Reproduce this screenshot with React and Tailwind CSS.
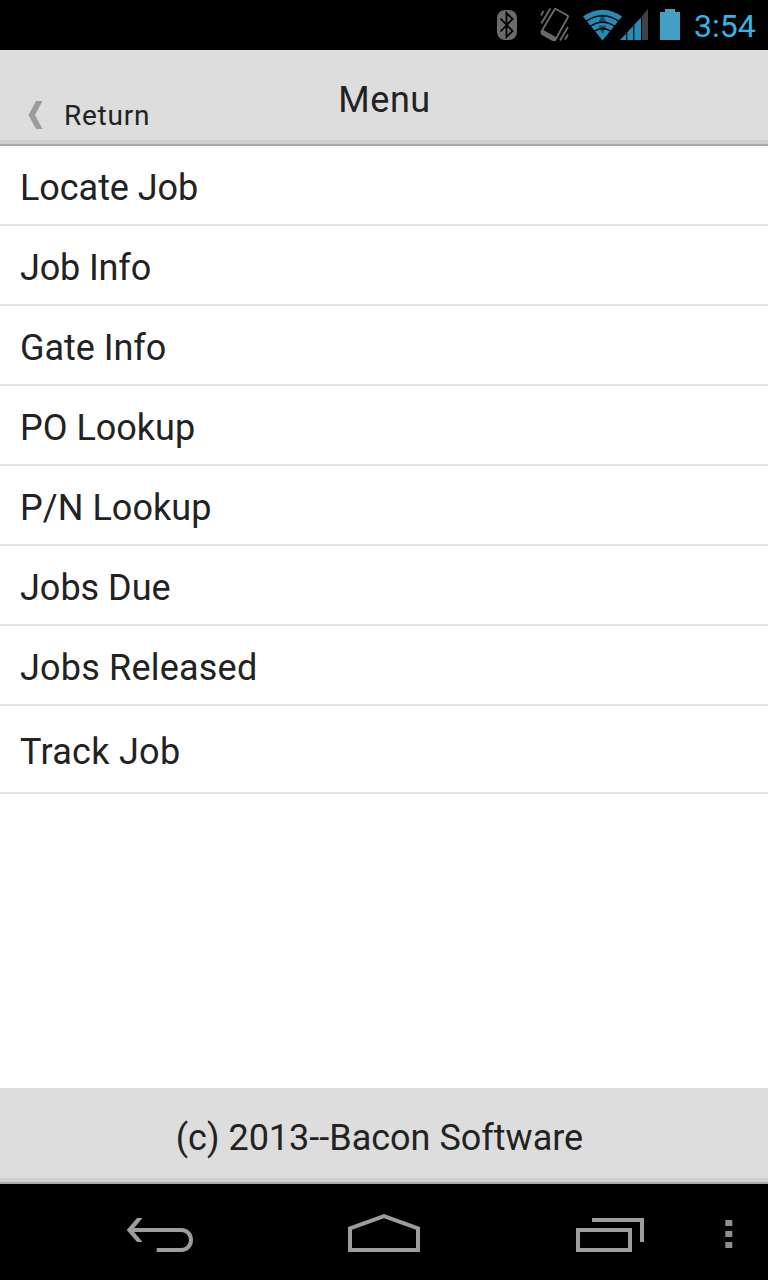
const items = [
  { label: 'Locate Job', spacing: 'tracking-[-0.05px]' },
  { label: 'Job Info', spacing: 'tracking-[-0.15px]' },
  { label: 'Gate Info', spacing: 'tracking-[-0.05px]' },
  { label: 'PO Lookup', spacing: 'tracking-[0px]' },
  { label: 'P/N Lookup', spacing: 'tracking-[0.05px]' },
  { label: 'Jobs Due', spacing: 'tracking-[0px]' },
  { label: 'Jobs Released', spacing: 'tracking-[0.2px]' },
  { label: 'Track Job', spacing: 'tracking-[0.28px]' },
];

function BluetoothIcon() {
  return (
    <svg className="h-[50px] w-[22px] shrink-0" viewBox="496 0 22 50" fill="none">
      <rect x="497" y="10" width="20" height="30" rx="8" fill="#6a6a6a" />
      <path d="M500.5 18.5 L512.5 31 L506.5 37 V13 L512.5 19 L500.5 31.5" stroke="#000" strokeWidth="1.8" />
    </svg>
  );
}

function VibrateIcon() {
  return (
    <svg className="h-[50px] w-[32px] shrink-0" viewBox="539 0 32 50" fill="none" stroke="#6a6a6a">
      <path d="M541.5 31.5 L554.5 9.5 Q555.2 8.5 556.3 9.2 L567.5 15.5 Q568.5 16.2 567.9 17.3 L555.5 39.5 Q554.8 40.8 553.5 40 L542 33.3 Q540.9 32.6 541.5 31.5Z" strokeWidth="1.8" />
      <path d="M542.5 29.5 L557 37.7 L554.8 41 H552.5 L541 34.5Z" fill="#6a6a6a" stroke="none" />
      <path d="M541 15.5 L543.5 11 M541.3 23.5 L550.3 8.5 M560 40.5 L568 27 M565 39.5 L568 34.5" strokeWidth="1.8" />
    </svg>
  );
}

function WifiIcon() {
  return (
    <svg className="h-[50px] w-[40px] shrink-0" viewBox="583 0 40 50" fill="none">
      <path d="M602.5 40.5 L583 16.5 Q602.5 3 622 16.5Z" fill="#278cb5" />
      <path d="M602.5 13.5 L606.5 22.5 H598.5Z M598.5 25.5 H606.5 L602.5 34.5Z" fill="#164f66" />
      <path d="M586 21.3 Q602.5 10.2 619 21.3 M590 26.5 Q602.5 18 615 26.5 M594 31.5 Q602.5 25.5 611 31.5" stroke="#000" strokeWidth="1.4" />
    </svg>
  );
}

function SignalIcon() {
  return (
    <svg className="-ml-1 h-[50px] w-[30px] shrink-0" viewBox="619 0 30 50">
      <path d="M620 40 L641 17.5 V40Z" fill="#278cb5" />
      <path d="M626.7 32 V40 M633.7 24 V40" stroke="#06202b" strokeWidth="1.4" />
      <path d="M642 40 V16 L648 9 V40Z" fill="#424242" />
    </svg>
  );
}

function StatusBar() {
  return (
    <header className="flex h-[50px] shrink-0 bg-black pl-[496px]">
      <BluetoothIcon />
      <div className="w-[21px]" />
      <VibrateIcon />
      <div className="w-3" />
      <WifiIcon />
      <SignalIcon />
      <svg className="ml-[11px] h-[50px] w-[20px] shrink-0" viewBox="660 0 20 50">
        <path d="M660 12 H665 V9 H675 V12 H680 V40 H660Z" fill="#449fc5" />
      </svg>
      <span className="ml-[14px] mt-[7px] whitespace-nowrap text-[32px] leading-[38px] text-[#33b5e5]">3:54</span>
    </header>
  );
}

function BottomNav() {
  return (
    <nav className="flex h-24 shrink-0 bg-black pl-[124px]">
      <svg className="h-24 w-[72px]" viewBox="124 1184 72 96" fill="none" stroke="#9d9d9d" strokeWidth="4">
        <path d="M131 1230 H181 C186.5 1230 191 1234 191 1240 S186.5 1250 181 1250 H156.7" />
        <path d="M137 1218 H142.5 L132.5 1230 L142.5 1242 H137 L126.7 1230Z" fill="#9d9d9d" stroke="none" />
      </svg>
      <svg className="ml-[152px] h-24 w-[72px]" viewBox="348 1184 72 96" fill="none" stroke="#9d9d9d" strokeWidth="4">
        <path d="M350 1250 V1228.3 L384 1216.2 L418 1228.3 V1250Z" />
      </svg>
      <svg className="ml-[156px] h-24 w-[68px]" viewBox="576 1184 68 96" fill="none" stroke="#9d9d9d" strokeWidth="4">
        <path d="M578 1230 H630 V1250 H578Z M592 1220 H642 V1242" />
      </svg>
      <svg className="ml-[81px] h-24 w-2" viewBox="725 1184 8 96" fill="#8e8e8e">
        <path d="M725.3 1220h7v6h-7z M725.3 1231h7v6h-7z M725.3 1242h7v6h-7z" />
      </svg>
    </nav>
  );
}

export default function App() {
  return (
    <div className="flex h-[1280px] w-[768px] flex-col overflow-hidden bg-white font-['Roboto',sans-serif] text-[#222]">
      <StatusBar />
      <div className="h-24 shrink-0 border-b-2 border-[#aaa]">
        <div className="grid h-[94px] grid-cols-3 border-b-4 border-[#cfcfcf] bg-[#ddd]">
          <button className="mt-[44px] flex h-[42px] items-center self-start pl-7 text-[28px] leading-8 tracking-[0.75px]">
            <svg className="mr-[20px] h-[28px] w-4 shrink-0" viewBox="0 0 16 28">
              <path d="M8 0 H14.5 L7 14 L14.5 28 H8 L0.5 14Z" fill="#9c9c9c" />
            </svg>
            <span className="pt-0.5">Return</span>
          </button>
          <h1 className="mt-[29px] pl-px text-center text-[36px] leading-[42px] tracking-[0.6px]">Menu</h1>
        </div>
      </div>
      <ul className="flex-1">
        {items.map(({ label, spacing }) => (
          <li key={label} className="flex h-20 items-center border-b-2 border-[#e3e3e3] pl-5 pt-1.5 text-[36px] leading-[42px] last:h-[88px]">
            <span className={spacing}>{label}</span>
          </li>
        ))}
      </ul>
      <footer className="h-24 shrink-0 border-b-2 border-[#aaa]">
        <div className="flex h-[94px] justify-center border-b-4 border-[#cfcfcf] bg-[#ddd] pr-[9px] pt-[29px] text-[36px] leading-[42px]">
          (c) 2013--Bacon Software
        </div>
      </footer>
      <BottomNav />
    </div>
  );
}
